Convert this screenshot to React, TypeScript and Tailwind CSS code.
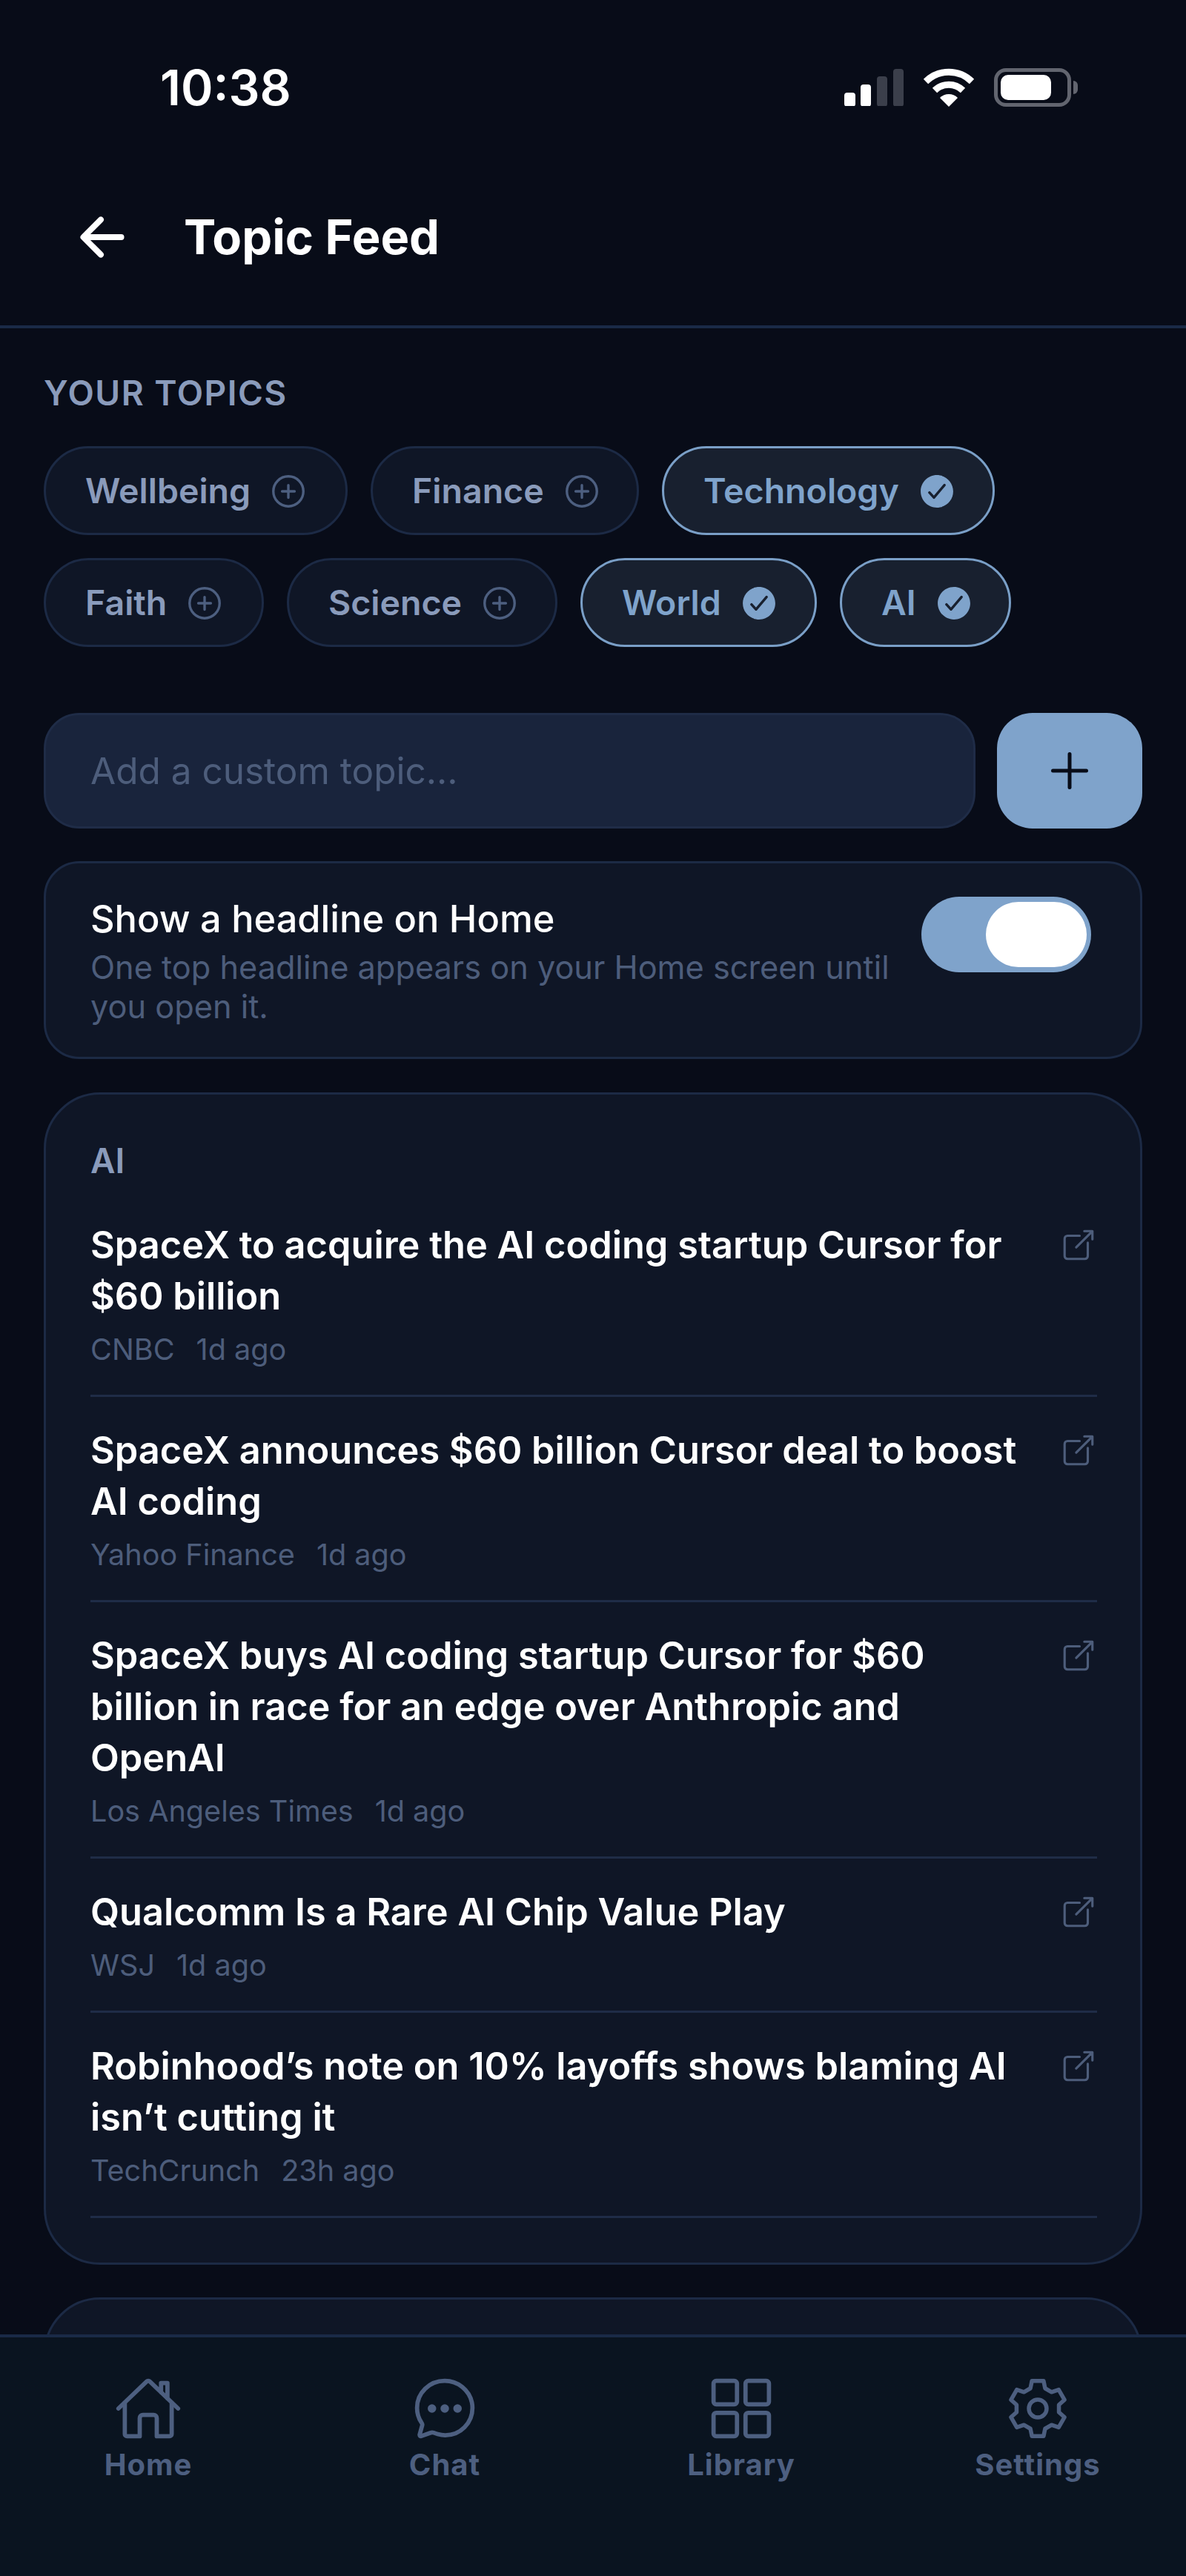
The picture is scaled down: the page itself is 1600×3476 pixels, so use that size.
import React from 'react';
import { IoAddCircleOutline, IoArrowBack, IoCheckmarkCircle, IoChatbubbleEllipsesOutline, IoGridOutline, IoHomeOutline, IoOpenOutline, IoAdd } from 'react-icons/io5';

const font = { fontFamily: 'Inter, "Noto Sans", sans-serif' };

type Topic = { name: string; on: boolean; width: string };

const rows: Topic[][] = [
  [
    { name: 'Wellbeing', on: false, width: 'w-[410px]' },
    { name: 'Finance', on: false, width: 'w-[362px]' },
    { name: 'Technology', on: true, width: 'w-[449px]' },
  ],
  [
    { name: 'Faith', on: false, width: 'w-[297px]' },
    { name: 'Science', on: false, width: 'w-[365px]' },
    { name: 'World', on: true, width: 'w-[319px]' },
    { name: 'AI', on: true, width: 'w-[231px]' },
  ],
];

const articles = [
  { title: 'SpaceX to acquire the AI coding startup Cursor for $60 billion', source: 'CNBC', age: '1d ago' },
  { title: 'SpaceX announces $60 billion Cursor deal to boost AI coding', source: 'Yahoo Finance', age: '1d ago' },
  { title: 'SpaceX buys AI coding startup Cursor for $60 billion in race for an edge over Anthropic and OpenAI', source: 'Los Angeles Times', age: '1d ago' },
  { title: 'Qualcomm Is a Rare AI Chip Value Play', source: 'WSJ', age: '1d ago' },
  { title: 'Robinhood’s note on 10% layoffs shows blaming AI isn’t cutting it', source: 'TechCrunch', age: '23h ago' },
];

// six tooth gear, the io5 one has a different outline
const gearPath = () => {
  const at = (r: number, deg: number) => {
    const a = (deg * Math.PI) / 180;
    return `${(46 + r * Math.cos(a)).toFixed(2)} ${(46 + r * Math.sin(a)).toFixed(2)}`;
  };
  let d = '';
  for (let i = 0; i < 6; i++) {
    const a = -90 + 60 * i;
    d += `${i === 0 ? 'M' : 'L'}${at(29, a - 20)} L${at(38, a - 12)} L${at(38, a + 12)} L${at(29, a + 20)} `;
  }
  return d + 'Z';
};

const GearIcon = ({ className }: { className?: string }) => (
  <svg className={className} viewBox="0 0 92 92" fill="none" stroke="currentColor" strokeWidth="5.5" strokeLinejoin="round">
    <path d={gearPath()} />
    <circle cx="46" cy="46" r="12" />
  </svg>
);

const tabs = [
  { label: 'Home', Icon: IoHomeOutline },
  { label: 'Chat', Icon: IoChatbubbleEllipsesOutline },
  { label: 'Library', Icon: IoGridOutline },
  { label: 'Settings', Icon: GearIcon },
];

const StatusIcons = () => (
  <div className="flex items-center gap-[26px]">
    <svg width="80" height="50" viewBox="0 0 80 50">
      <rect x="0" y="32" width="15" height="19" rx="4" fill="#fff" />
      <rect x="22" y="21" width="14" height="30" rx="4" fill="#fff" />
      <rect x="44" y="10" width="14" height="41" rx="4" fill="#3b3f4b" />
      <rect x="66" y="0" width="14" height="51" rx="4" fill="#3b3f4b" />
    </svg>
    <svg width="70" height="52" viewBox="0 0 70 52">
      <path d="M4 18 A44 44 0 0 1 66 18" fill="none" stroke="#fff" strokeWidth="9" />
      <path d="M16 30 A27 27 0 0 1 54 30" fill="none" stroke="#fff" strokeWidth="9" />
      <path d="M35 52 L23 40 A17 17 0 0 1 47 40 Z" fill="#fff" />
    </svg>
    <div className="flex items-center gap-[3px]">
      <div className="w-[104px] h-[52px] rounded-[16px] border-[5px] border-[#62656f] p-[4px]">
        <div className="w-[68px] h-full rounded-[10px] bg-white" />
      </div>
      <div className="w-[6px] h-[18px] rounded-r-full bg-[#62656f]" />
    </div>
  </div>
);

const Chip = ({ topic }: { topic: Topic }) => (
  <div
    className={`${topic.width} h-[120px] rounded-full flex items-center pl-[53px] pt-[2px] gap-[24px] border-[3px] ${
      topic.on ? 'bg-[#18202f] border-[#7a9fc7] text-[#7fa3cb]' : 'bg-[#0f1626] border-[#1c2a45] text-[#8a9bbb]'
    }`}
  >
    <span className="text-[46.5px] font-semibold">{topic.name}</span>
    {topic.on ? (
      <IoCheckmarkCircle className="w-[54px] h-[54px] text-[#7fa3cb]" />
    ) : (
      <IoAddCircleOutline className="w-[54px] h-[54px] text-[#4d5f80]" />
    )}
  </div>
);

const ArticleRow = ({ title, source, age }: { title: string; source: string; age: string }) => (
  <div className="flex items-start justify-between border-b-[3px] border-[#1f2c47] pt-[37px] pb-[33px]">
    <div className="w-[1255px]">
      <div className="text-[50.5px] leading-[69px] font-semibold text-white">{title}</div>
      <div className="mt-[10px] text-[39.6px] leading-[56px] text-[#4d5d7b] flex gap-[29px]">
        <span>{source}</span>
        <span>{age}</span>
      </div>
    </div>
    <IoOpenOutline className="w-[50px] h-[50px] mt-[10px] text-[#4d5d7b]" />
  </div>
);

export default function App() {
  return (
    <div style={font} className="w-[1600px] h-[3476px] bg-[#080c18] flex flex-col overflow-hidden">
      {/* status bar */}
      <div className="h-[232px] shrink-0 flex items-center justify-between pl-[216px] pr-[146px] pt-[4px]">
        <span className="text-[66px] font-semibold text-white">10:38</span>
        <StatusIcons />
      </div>

      {/* header */}
      <div className="h-[211px] shrink-0 flex items-center gap-[68px] pl-[96px] pb-[32px] border-b-[4px] border-[#1a2a47]">
        <IoArrowBack className="w-[84px] h-[84px] text-white" />
        <span className="text-[65px] font-bold text-white">Topic Feed</span>
      </div>

      <div className="flex-1 min-h-0 overflow-hidden px-[59px]">
        <div className="mt-[60px] text-[46px] leading-[54px] font-semibold tracking-[1.5px] text-[#8a9bbb]">YOUR TOPICS</div>
        <div className="mt-[45px] flex flex-col gap-[31px]">
          {rows.map((row, i) => (
            <div key={i} className="flex gap-[31px]">
              {row.map(t => <Chip key={t.name} topic={t} />)}
            </div>
          ))}
        </div>

        <div className="mt-[89px] flex gap-[29px]">
          <div className="flex-1 h-[156px] rounded-[48px] bg-[#19243c] border-[3px] border-[#1f2c47] flex items-center pl-[60px] text-[49.5px] text-[#4d5d7b]">
            Add a custom topic...
          </div>
          <div className="w-[196px] h-[156px] rounded-[48px] bg-[#7fa3cb] flex items-center justify-center">
            <IoAdd className="w-[80px] h-[80px] text-[#080c18]" />
          </div>
        </div>

        <div className="mt-[44px] h-[267px] rounded-[48px] bg-[#0f1626] border-[3px] border-[#1c2a45] flex justify-between pl-[60px] pr-[66px] pt-[45px]">
          <div className="w-[1090px]">
            <div className="text-[50.5px] leading-[60px] font-medium text-white">Show a headline on Home</div>
            <div className="mt-[9px] text-[43.3px] leading-[53px] text-[#4d5d7b]">One top headline appears on your Home screen until you open it.</div>
          </div>
          <div className="w-[229px] h-[102px] rounded-full bg-[#7fa3cb] flex items-center justify-end pr-[6px]">
            <div className="w-[136px] h-[88px] rounded-full bg-white" />
          </div>
        </div>

        <div className="mt-[45px] rounded-[76px] bg-[#0f1626] border-[3px] border-[#1c2a45] pl-[60px] pr-[58px] pt-[62px] pb-[60px]">
          <div className="text-[46px] leading-[54px] font-semibold text-[#8a9bbb]">AI</div>
          <div className="mt-[15px]">
            {articles.map(a => <ArticleRow key={a.title} {...a} />)}
          </div>
        </div>

        <div className="mt-[44px] h-[200px] rounded-t-[76px] bg-[#0f1626] border-[3px] border-[#1c2a45]" />
      </div>

      {/* tab bar */}
      <div className="h-[326px] shrink-0 bg-[#0a1420] border-t-[4px] border-[#1a2a47] grid grid-cols-4 pt-[50px]">
        {tabs.map(({ label, Icon }) => (
          <div key={label} className="flex flex-col items-center text-[#4d5f80]">
            <Icon className="w-[92px] h-[92px]" />
            <span className="text-[40px] font-bold tracking-[1px] leading-[48px] mt-[6px]">{label}</span>
          </div>
        ))}
      </div>
    </div>
  );
}
